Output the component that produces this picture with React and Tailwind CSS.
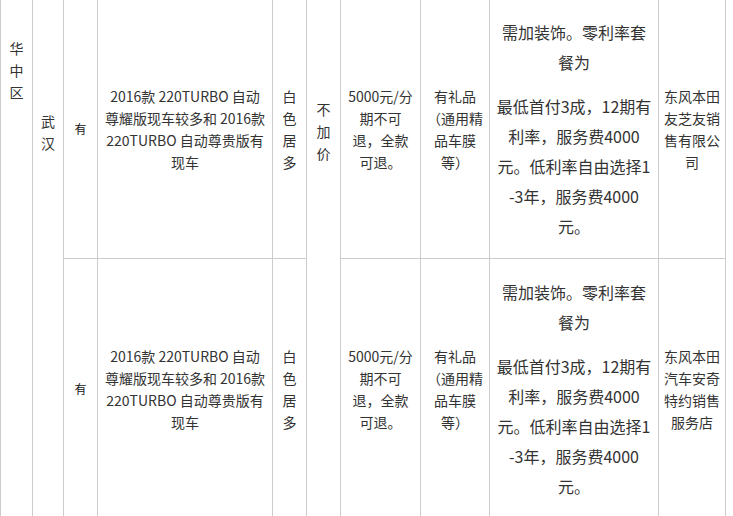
import React from 'react';

const FONT = { fontFamily: '"Noto Sans CJK SC", "Noto Sans", sans-serif' };

const rows = [
  {
    dealer: ['东风本田', '友芝友销', '售有限公', '司'],
  },
  {
    dealer: ['东风本田', '汽车安奇', '特约销售', '服务店'],
  },
];

const Lines = ({ items }) => (
  <>
    {items.map((t, i) => (
      <div key={i}>{t}</div>
    ))}
  </>
);

const cell = 'border border-[#cccccc] text-center align-middle px-1';

const App = () => (
  <div className="w-[733px] h-[516px] overflow-hidden bg-white text-[#333333]" style={FONT}>
    <table className="table-fixed border-collapse w-[725px] -mt-[2px] text-[14px] leading-[22px]">
      <colgroup>
        <col className="w-[32px]" />
        <col className="w-[31px]" />
        <col className="w-[34px]" />
        <col className="w-[175px]" />
        <col className="w-[34px]" />
        <col className="w-[34px]" />
        <col className="w-[80px]" />
        <col className="w-[69px]" />
        <col className="w-[169px]" />
        <col className="w-[67px]" />
      </colgroup>
      <tbody>
        {rows.map((row, i) => (
          <tr key={i} className="h-[260px]">
            {i === 0 && (
              <>
                <td rowSpan={2} className="border border-[#cccccc] text-center align-top pt-[38px]">
                  <Lines items={['华', '中', '区']} />
                </td>
                <td rowSpan={2} className="border border-[#cccccc] text-center align-top pt-[111px]">
                  <Lines items={['武', '汉']} />
                </td>
              </>
            )}
            <td className={`${cell} text-[12px] text-[#111111]`}>有</td>
            <td className={cell}>
              <Lines items={['2016款 220TURBO 自动', '尊耀版现车较多和 2016款', '220TURBO 自动尊贵版有', '现车']} />
            </td>
            <td className={cell}>
              <Lines items={['白', '色', '居', '多']} />
            </td>
            {i === 0 && (
              <td rowSpan={2} className="border border-[#cccccc] text-center align-top pt-[99px]">
                <Lines items={['不', '加', '价']} />
              </td>
            )}
            <td className={cell}>
              <Lines items={['5000元/分', '期不可', '退，全款', '可退。']} />
            </td>
            <td className={cell}>
              <Lines items={['有礼品', '（通用精', '品车膜', '等）']} />
            </td>
            <td className={`${cell} text-[16px] leading-[30px]`}>
              <Lines items={['需加装饰。零利率套', '餐为']} />
              <div className="mt-[14px]">
                <Lines items={['最低首付3成，12期有', '利率，服务费4000', '元。低利率自由选择1', '-3年，服务费4000', '元。']} />
              </div>
            </td>
            <td className={cell}>
              <Lines items={row.dealer} />
            </td>
          </tr>
        ))}
      </tbody>
    </table>
  </div>
);

export default App;
